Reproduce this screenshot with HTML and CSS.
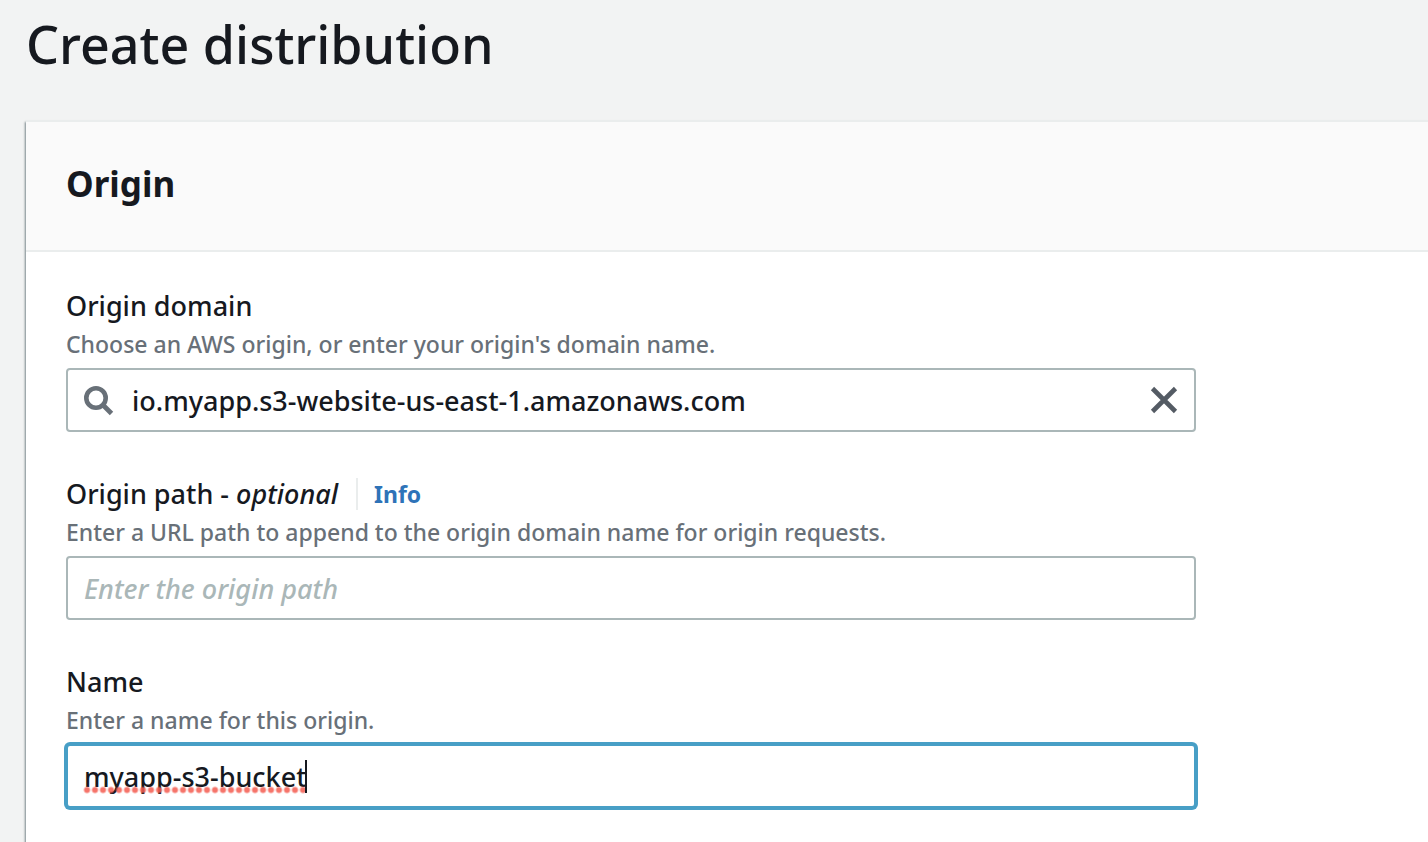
FILE: index.html
```html
<!DOCTYPE html>
<html lang="en">
<head>
<meta charset="utf-8">
<title>Create distribution</title>
<link rel="stylesheet" href="styles.css">
</head>
<body>
<main class="page">
  <h1 class="page-title">Create distribution</h1>
  <section class="card">
    <header class="card-header"><h2 class="card-title">Origin</h2></header>
    <form class="card-body">
      <div class="field">
        <label class="label" for="domain">Origin domain</label>
        <p class="hint">Choose an AWS origin, or enter your origin's domain name.</p>
        <div class="control">
          <svg class="search-icon" viewBox="0 0 32 32" aria-hidden="true"><circle cx="14" cy="14" r="9.700" fill="none" stroke="currentColor" stroke-width="4.600"/><path d="M20.500 20.500l9 9" fill="none" stroke="currentColor" stroke-width="4.800"/></svg>
          <input class="input input-search" id="domain" type="text" value="io.myapp.s3-website-us-east-1.amazonaws.com">
          <button class="clear" type="button" aria-label="Clear"><svg viewBox="0 0 32 32" aria-hidden="true"><path d="M4.500 4.500l23 23M27.500 4.500l-23 23" fill="none" stroke="currentColor" stroke-width="4.600"/></svg></button>
        </div>
      </div>
      <div class="field">
        <div class="label-row">
          <label class="label" for="path">Origin path - <em>optional</em></label>
          <a class="info" href="#">Info</a>
        </div>
        <p class="hint">Enter a URL path to append to the origin domain name for origin requests.</p>
        <input class="input" id="path" type="text" placeholder="Enter the origin path">
      </div>
      <div class="field">
        <label class="label" for="name">Name</label>
        <p class="hint">Enter a name for this origin.</p>
        <div class="control">
          <input class="input input-active" id="name" type="text" value="myapp-s3-bucket" spellcheck="false">
          <span class="spelling"></span>
          <span class="caret"></span>
        </div>
      </div>
    </form>
  </section>
</main>
</body>
</html>
```
FILE: styles.css
```css
* { box-sizing: border-box; }
body {
  margin: 0;
  background: #f2f3f3;
  color: #16191f;
  font-family: "Noto Sans", "Open Sans", sans-serif;
  overflow-x: hidden;
}
.page {
  display: flex;
  flex-direction: column;
  min-height: 100vh;
  padding-left: 26px;
}
.page-title {
  margin: 0 0 32px;
  font-size: 52px;
  line-height: 88px;
  font-weight: 500;
}
.card {
  flex: 1;
  background: #fff;
  border-top: 2px solid #eaeded;
  box-shadow: -1px 2px 2px rgba(0, 28, 36, 0.5);
}
.card-header {
  padding: 38px 40px 42px;
  background: #fafafa;
  border-bottom: 2px solid #eaeded;
}
.card-title {
  margin: 0;
  font-size: 35px;
  line-height: 48px;
  font-weight: 700;
}
.card-body {
  display: flex;
  flex-direction: column;
  gap: 42px;
  padding: 34px 40px 32px;
}
.field {
  display: flex;
  flex-direction: column;
  width: 100%;
  max-width: 1130px;
}
.label {
  font-size: 27px;
  line-height: 40px;
  font-weight: 500;
}
.label-row {
  display: flex;
  align-items: center;
}
.info {
  margin-left: 18px;
  padding-left: 16px;
  border-left: 2px solid #eaeded;
  color: #2e73b8;
  font-size: 23px;
  line-height: 32px;
  font-weight: 700;
  text-decoration: none;
}
.hint {
  margin: 0 0 6px;
  color: #687078;
  font-size: 23px;
  line-height: 36px;
  font-weight: 500;
}
.control {
  position: relative;
  display: flex;
}
.input {
  width: 100%;
  height: 64px;
  padding: 0 16px;
  border: 2px solid #aab7b8;
  border-radius: 4px;
  outline: none;
  background: #fff;
  color: #16191f;
  font-family: inherit;
  font-size: 27px;
  font-weight: 500;
}
.input::placeholder {
  color: #aab7b8;
  font-style: italic;
  opacity: 1;
}
.input-search { padding-left: 64px; padding-right: 64px; }
.input-active {
  border-color: #489fc6;
  box-shadow: 0 0 0 2px #489fc6;
}
.search-icon {
  position: absolute;
  left: 16px;
  top: 16px;
  width: 32px;
  height: 32px;
  color: #687078;
}
.clear {
  position: absolute;
  right: 16px;
  top: 16px;
  width: 32px;
  height: 32px;
  padding: 0;
  border: 0;
  background: none;
  color: #545b64;
}
.clear svg { display: block; }
.spelling {
  position: absolute;
  left: 17px;
  top: 42px;
  width: 224px;
  height: 8px;
  background: radial-gradient(circle, rgba(244, 92, 80, 0.85) 2px, transparent 4px) 0 0 / 8px 8px;
}
.caret {
  position: absolute;
  left: 239px;
  top: 16px;
  width: 2px;
  height: 33px;
  background: #16191f;
}
```
